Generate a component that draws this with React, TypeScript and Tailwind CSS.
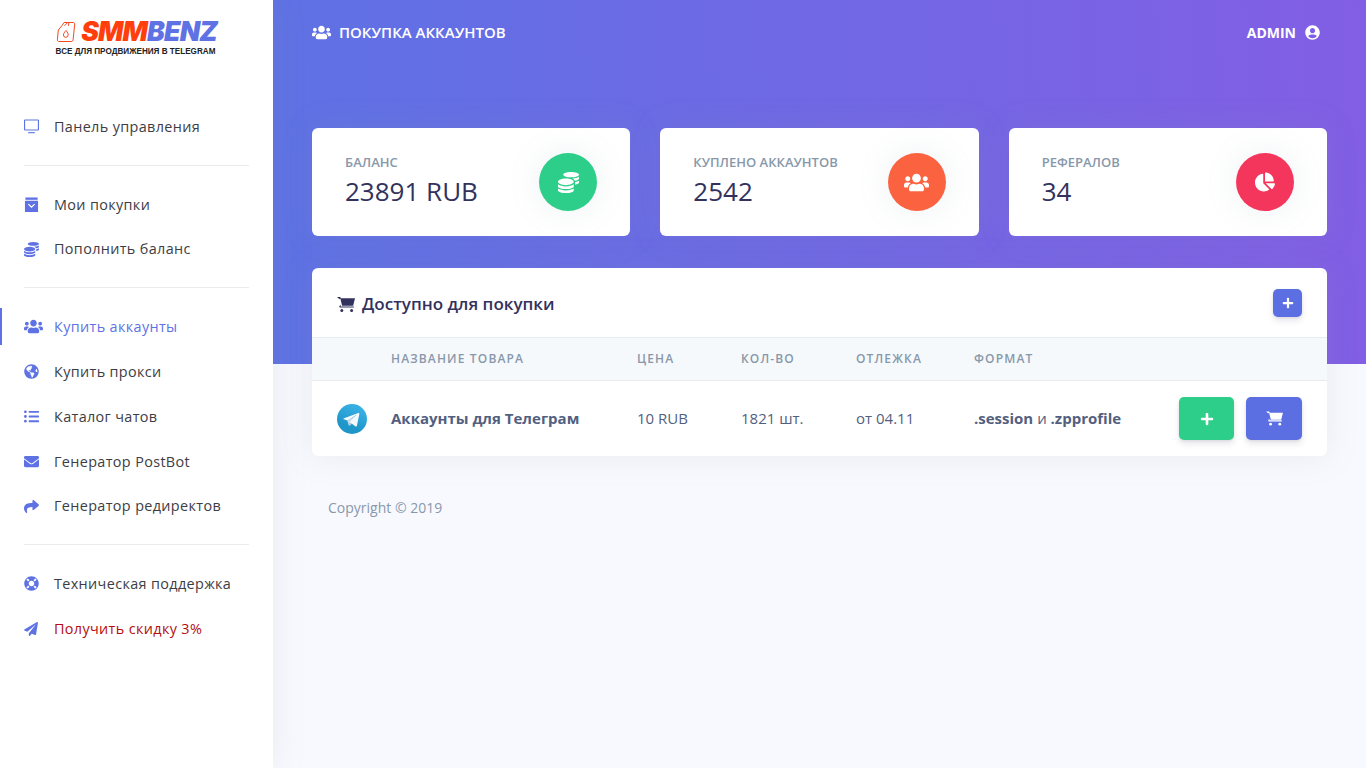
import React from 'react';
import {
  FaChartPie,
  FaCoins,
  FaEnvelope,
  FaGlobeAmericas,
  FaLifeRing,
  FaListUl,
  FaPaperPlane,
  FaPlus,
  FaShare,
  FaUserCircle,
  FaUsers,
} from 'react-icons/fa';

const TvIcon = () => (
  <svg viewBox="0 0 16 16" className="w-[15px] h-[15px]" fill="none" stroke="currentColor" strokeWidth="1.2">
    <rect x="0.6" y="1.1" width="14.8" height="10.6" rx="0.6" />
    <path d="M4.5 14.6h7" />
  </svg>
);

const BagIcon = () => (
  <svg viewBox="0 0 15 16" className="w-[15px] h-[15px]" fill="currentColor">
    <path d="M1 0.5h13V3H1z" />
    <path fillRule="evenodd" d="M0.5 4h14v12H0.5zM4.6 7.2l-.9.9L7.5 11.6l3.8-3.5-.9-.9-2.9 2.6z" />
  </svg>
);

// cart with a solid basket, thin handle and rail
const CartIcon = ({ className }: { className: string }) => (
  <svg viewBox="0 0 18 16" className={className} fill="currentColor">
    <path d="M0 .6h3.4l.5 1.6H2.6l.2.8" />
    <path d="M3.3 1.8H18l-1.9 7.4H5.1z" />
    <path d="M3.6 9.9h13.2v1.2H3.3c-.9 0-1.3-.9-.8-1.6L3.6 8z" />
    <circle cx="4.8" cy="14" r="1.5" />
    <circle cx="14.6" cy="14" r="1.5" />
  </svg>
);

const TelegramIcon = () => (
  <svg viewBox="0 0 30 30" className="w-[30px] h-[30px]">
    <defs>
      <linearGradient id="tg" x1="0.66" y1="0.17" x2="0.41" y2="0.75">
        <stop offset="0" stopColor="#37aee2" />
        <stop offset="1" stopColor="#1e96c8" />
      </linearGradient>
    </defs>
    <circle cx="15" cy="15" r="15" fill="url(#tg)" />
    <path d="M12.3 21.8c-.5 0-.4-.2-.6-.6l-1.4-4.7 11-6.5" fill="#c8daea" />
    <path d="M12.3 21.8c.4 0 .5-.2.8-.4l2-1.9-2.5-1.5" fill="#a9c9dd" />
    <path d="M12.6 18l6 4.4c.7.4 1.2.2 1.3-.6l2.4-11.5c.3-1-.4-1.5-1-1.2L7.1 14.2c-.9.4-.9.9-.2 1.1l3.6 1.1 8.3-5.2c.4-.2.8-.1.5.1" fill="#f4f9fc" />
  </svg>
);

const CanisterIcon = () => (
  <svg viewBox="0 0 20 22" className="w-[20px] h-[22px]" fill="none" stroke="#f4491f" strokeWidth="1">
    <path d="M6 4.5L8 1.5h9.2c1 0 1.6.8 1.5 1.6l-1.6 15.8c-.1 1-.8 1.6-1.7 1.6H3c-1 0-1.7-.8-1.6-1.8L2.3 9z" />
    <path d="M8.5 4.8l3-3.2M13 1.5l-.6 3.3" />
    <path d="M10 9.5c1.5 2 2.3 3.2 2.2 4.4a2.4 2.4 0 0 1-4.8 0c0-1.2 1.2-2.8 2.6-4.4z" />
  </svg>
);

type NavItem = {
  label: string;
  icon: React.ReactNode;
  active?: boolean;
  danger?: boolean;
};

const navGroups: NavItem[][] = [
  [{ label: 'Панель управления', icon: <TvIcon /> }],
  [
    { label: 'Мои покупки', icon: <BagIcon /> },
    { label: 'Пополнить баланс', icon: <FaCoins size={15} /> },
  ],
  [
    { label: 'Купить аккаунты', icon: <FaUsers size={19} />, active: true },
    { label: 'Купить прокси', icon: <FaGlobeAmericas size={15} /> },
    { label: 'Каталог чатов', icon: <FaListUl size={15} /> },
    { label: 'Генератор PostBot', icon: <FaEnvelope size={15} /> },
    { label: 'Генератор редиректов', icon: <FaShare size={15} /> },
  ],
  [
    { label: 'Техническая поддержка', icon: <FaLifeRing size={15} /> },
    { label: 'Получить скидку 3%', icon: <FaPaperPlane size={14} />, danger: true },
  ],
];

const stats = [
  { title: 'Баланс', value: '23891 RUB', icon: <FaCoins size={21} />, color: 'bg-[#2dce89]' },
  { title: 'Куплено аккаунтов', value: '2542', icon: <FaUsers size={25} />, color: 'bg-[#fb6340]' },
  { title: 'Рефералов', value: '34', icon: <FaChartPie size={20} />, color: 'bg-[#f5365c]' },
];

const Sidebar = () => (
  <aside className="relative z-10 w-[273px] shrink-0 bg-white shadow-[0_0_32px_0_rgba(136,152,170,0.15)]">
    <div className="h-[104.2px] pt-[19px] flex flex-col items-center">
      <div className="flex items-center h-[25px]">
        <CanisterIcon />
        <span className="ml-[5px] font-['Inter',sans-serif] font-black italic text-[26.5px] leading-none tracking-[-0.8px] text-[#ff3d0d]">
          SMM<span className="text-[#5e72e4]">BENZ</span>
        </span>
      </div>
      <div className="mt-[3px] -ml-[2px] font-['Liberation_Sans',sans-serif] font-bold text-[8.15px] leading-[10px] text-[#222]">
        ВСЕ ДЛЯ ПРОДВИЖЕНИЯ В TELEGRAM
      </div>
    </div>
    {navGroups.map((group, i) => (
      <div key={i}>
        {i > 0 && <hr className="mt-[15.8px] mb-[16.2px] mx-6 border-[#e9ecef]" />}
        <ul>
          {group.map(item => (
            <li key={item.label} className="relative h-[44.8px] pl-6 flex items-center">
              {item.active && <span className="absolute left-0 top-[3.5px] bottom-[4.5px] w-[2px] bg-[#5e72e4]" />}
              <span className="w-[30px] shrink-0 text-[#5e72e4] flex items-center">{item.icon}</span>
              <span
                className={`text-[14.4px] tracking-[0.36px] ${
                  item.danger ? 'text-[#b50d0d]' : item.active ? 'text-[#5e72e4]' : 'text-[#3d3d44]'
                }`}
              >
                {item.label}
              </span>
            </li>
          ))}
        </ul>
      </div>
    ))}
  </aside>
);

const StatCard = ({ title, value, icon, color }: (typeof stats)[number]) => (
  <div className="h-[108px] rounded-[6px] bg-white pl-[33px] pr-[33px] flex items-center justify-between shadow-[0_0_32px_0_rgba(136,152,170,0.15)]">
    <div className="-mt-[4px]">
      <div className="text-[13px] leading-[18px] font-semibold uppercase text-[#8898aa]">{title}</div>
      <div className="mt-[4px] text-[26px] leading-[32px] font-medium text-[#32325d]">{value}</div>
    </div>
    <div className={`w-[58px] h-[58px] rounded-full text-white flex items-center justify-center shadow-[0_0_32px_0_rgba(136,152,170,0.15)] ${color}`}>
      {icon}
    </div>
  </div>
);

export default function App() {
  return (
    <div className="h-screen overflow-hidden flex bg-[#f8f9fe] font-['Open_Sans',sans-serif]">
      <Sidebar />
      <main className="flex-1 min-w-0">
        <section className="h-[364px] px-[39px] bg-[linear-gradient(87deg,#5e72e4_0,#825ee4_100%)]">
          <div className="h-[64px] pr-[7px] flex items-center justify-between text-white uppercase">
            <div className="flex items-center gap-[8px] text-[15px] font-semibold">
              <FaUsers size={19} />
              <span>Покупка аккаунтов</span>
            </div>
            <div className="flex items-center gap-[9px] text-[14px] font-bold">
              <span>Admin</span>
              <FaUserCircle size={15} />
            </div>
          </div>
          <div className="mt-[64px] grid grid-cols-3 gap-[30px]">
            {stats.map(s => (
              <StatCard key={s.title} {...s} />
            ))}
          </div>
        </section>

        <section className="relative -mt-[96px] px-[39px]">
          <div className="rounded-[6px] bg-white overflow-hidden shadow-[0_0_32px_0_rgba(136,152,170,0.15)]">
            <div className="h-[69px] pl-[25px] pr-[25px] flex items-center justify-between">
              <div className="flex items-center gap-[7px] mt-[3px] text-[#32325d]">
                <CartIcon className="w-[18px] h-[17px]" />
                <h3 className="text-[17px] font-semibold">Доступно для покупки</h3>
              </div>
              <button className="w-[29px] h-[28px] rounded-[5px] bg-[#5b6fe2] text-white flex items-center justify-center shadow-[0_4px_6px_rgba(50,50,93,0.11),0_1px_3px_rgba(0,0,0,0.08)]">
                <FaPlus size={12} />
              </button>
            </div>
            <div className="h-[44px] pb-[1px] grid grid-cols-[79px_246px_104px_115px_118px_1fr] items-center bg-[#f6f9fc] border-y border-[#e9ecef] text-[12px] font-semibold uppercase tracking-[1.15px] text-[#8898aa]">
              <span />
              <span>Название товара</span>
              <span>Цена</span>
              <span>Кол-во</span>
              <span>Отлежка</span>
              <span>Формат</span>
            </div>
            <div className="h-[75px] grid grid-cols-[79px_246px_104px_115px_118px_1fr] items-center text-[15px] text-[#525f7f]">
              <div className="pl-[25px] flex">
                <TelegramIcon />
              </div>
              <span className="font-bold">Аккаунты для Телеграм</span>
              <span>10 RUB</span>
              <span>1821 шт.</span>
              <span>от 04.11</span>
              <div className="flex items-center justify-between pr-[25px]">
                <span>
                  <b className="font-bold">.session</b> и <b className="font-bold">.zpprofile</b>
                </span>
                <div className="flex gap-[12px]">
                  <button className="w-[55px] h-[43px] rounded-[5px] bg-[#2dce89] text-white flex items-center justify-center shadow-[0_4px_6px_rgba(50,50,93,0.11),0_1px_3px_rgba(0,0,0,0.08)]">
                    <FaPlus size={14} />
                  </button>
                  <button className="w-[56px] h-[43px] rounded-[5px] bg-[#5b6fe2] text-white flex items-center justify-center shadow-[0_4px_6px_rgba(50,50,93,0.11),0_1px_3px_rgba(0,0,0,0.08)]">
                    <CartIcon className="w-[17px] h-[15px]" />
                  </button>
                </div>
              </div>
            </div>
          </div>
          <footer className="mt-[41px] pl-[16px] text-[14px] leading-[22px] text-[#8898aa]">Copyright © 2019</footer>
        </section>
      </main>
    </div>
  );
}
